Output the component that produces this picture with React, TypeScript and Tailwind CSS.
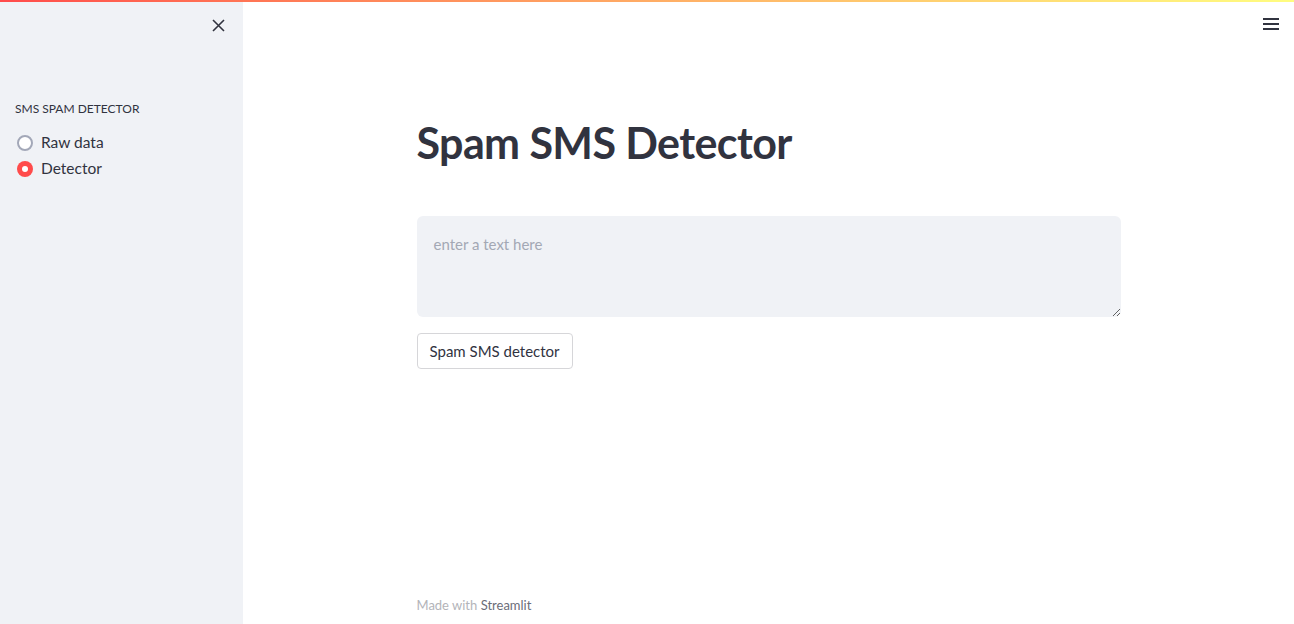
import React from "react";

const font = { fontFamily: "Lato, 'Noto Sans', sans-serif" };

function Radio({ label, checked }: { label: string; checked?: boolean }) {
  return (
    <label className="flex items-center h-[26px] gap-[8px] text-[15.5px] text-[#31333f]">
      {checked ? (
        <span className="w-[16px] h-[16px] rounded-full bg-[#ff4b4b] flex items-center justify-center">
          <span className="w-[6px] h-[6px] rounded-full bg-white" />
        </span>
      ) : (
        <span className="w-[16px] h-[16px] rounded-full border-2 border-[#a3a8b8] bg-white" />
      )}
      <span>{label}</span>
    </label>
  );
}

function App() {
  return (
    <div
      className="relative flex h-screen w-full overflow-hidden bg-white text-[#31333f]"
      style={font}
    >
      <div className="absolute top-0 left-0 right-0 h-[2px] bg-gradient-to-r from-[#ff4b4b] to-[#fffd80]" />

      <aside className="w-[243px] shrink-0 bg-[#f0f2f6] flex flex-col">
        <div className="flex justify-end pt-[19px] pr-[18px]">
          <svg width="13" height="13" viewBox="0 0 13 13" fill="none">
            <path d="M1 1L12 12M12 1L1 12" stroke="#31333f" strokeWidth="1.6" />
          </svg>
        </div>
        <div className="px-[15px] mt-[69px]">
          <div className="text-[12px] leading-[16px] mb-[13px]">SMS SPAM DETECTOR</div>
          <div className="pl-[2px]">
            <Radio label="Raw data" />
            <Radio label="Detector" checked />
          </div>
        </div>
      </aside>

      <main className="flex-1 flex flex-col relative">
        <div className="flex justify-end pt-[18px] pr-[15px]">
          <svg width="16" height="12" viewBox="0 0 16 12">
            <rect x="0" y="0" width="16" height="2" fill="#31333f" />
            <rect x="0" y="5" width="16" height="2" fill="#31333f" />
            <rect x="0" y="10" width="16" height="2" fill="#31333f" />
          </svg>
        </div>

        <div className="w-[704px] mx-auto mt-[66px]">
          <h1 className="text-[43px] leading-[53px] font-bold pt-[20px] pb-[16px] tracking-[-0.6px]">
            Spam SMS Detector
          </h1>
          <textarea
            placeholder="enter a text here"
            className="mt-[31px] block w-full h-[101px] rounded-[6px] bg-[#f0f2f6] px-[17px] pt-[18px] pb-[14px] text-[15px] leading-[20px] placeholder:text-[#a3a8b4] outline-none resize-y"
            style={font}
          />
          <button
            className="mt-[16px] h-[36px] px-[12px] rounded-[4px] border border-[#d6d6d9] bg-white text-[15px] text-[#31333f]"
            style={font}
          >
            Spam SMS detector
          </button>
        </div>

        <div className="mt-auto w-[704px] mx-auto pb-[9px] text-[13px] text-[#b3b4b9]">
          Made with <span className="text-[#6b6d78]">Streamlit</span>
        </div>
      </main>
    </div>
  );
}

export default App;
